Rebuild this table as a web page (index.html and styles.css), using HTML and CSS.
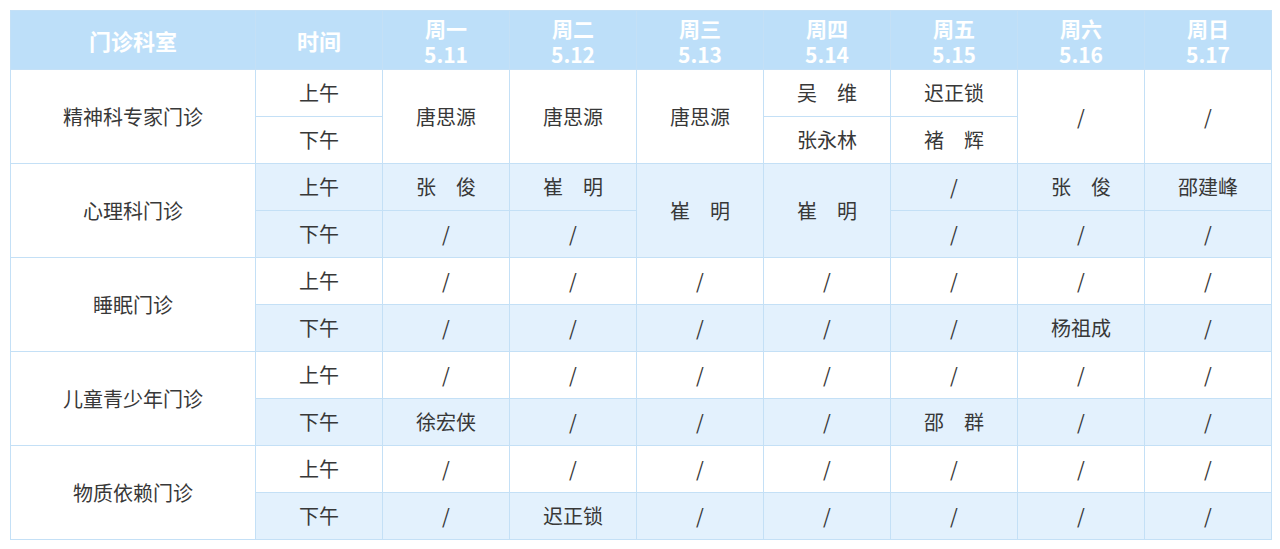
FILE: index.html
```html
<!DOCTYPE html>
<html lang="zh-CN">
<head>
<meta charset="utf-8">
<title>门诊排班</title>
<link rel="stylesheet" href="styles.css">
</head>
<body>
<table class="schedule">
  <colgroup>
    <col class="c-dept">
    <col class="c-time">
    <col class="c-day"><col class="c-day"><col class="c-day"><col class="c-day"><col class="c-day"><col class="c-day"><col class="c-day">
  </colgroup>
  <thead>
    <tr>
      <th class="h-big">门诊科室</th>
      <th class="h-big">时间</th>
      <th><span class="wk">周一</span><span class="dt">5.11</span></th>
      <th><span class="wk">周二</span><span class="dt">5.12</span></th>
      <th><span class="wk">周三</span><span class="dt">5.13</span></th>
      <th><span class="wk">周四</span><span class="dt">5.14</span></th>
      <th><span class="wk">周五</span><span class="dt">5.15</span></th>
      <th><span class="wk">周六</span><span class="dt">5.16</span></th>
      <th><span class="wk">周日</span><span class="dt">5.17</span></th>
    </tr>
  </thead>
  <tbody>
    <tr>
      <td rowspan="2" class="dept">精神科专家门诊</td>
      <td>上午</td>
      <td rowspan="2">唐思源</td>
      <td rowspan="2">唐思源</td>
      <td rowspan="2">唐思源</td>
      <td>吴　维</td>
      <td>迟正锁</td>
      <td rowspan="2">/</td>
      <td rowspan="2">/</td>
    </tr>
    <tr>
      <td>下午</td>
      <td>张永林</td>
      <td>褚　辉</td>
    </tr>
    <tr class="tint">
      <td rowspan="2" class="dept">心理科门诊</td>
      <td>上午</td>
      <td>张　俊</td>
      <td>崔　明</td>
      <td rowspan="2">崔　明</td>
      <td rowspan="2">崔　明</td>
      <td>/</td>
      <td>张　俊</td>
      <td>邵建峰</td>
    </tr>
    <tr class="tint">
      <td>下午</td>
      <td>/</td>
      <td>/</td>
      <td>/</td>
      <td>/</td>
      <td>/</td>
    </tr>
    <tr>
      <td rowspan="2" class="dept">睡眠门诊</td>
      <td>上午</td>
      <td>/</td><td>/</td><td>/</td><td>/</td><td>/</td><td>/</td><td>/</td>
    </tr>
    <tr class="tint">
      <td>下午</td>
      <td>/</td><td>/</td><td>/</td><td>/</td><td>/</td><td>杨祖成</td><td>/</td>
    </tr>
    <tr>
      <td rowspan="2" class="dept">儿童青少年门诊</td>
      <td>上午</td>
      <td>/</td><td>/</td><td>/</td><td>/</td><td>/</td><td>/</td><td>/</td>
    </tr>
    <tr class="tint">
      <td>下午</td>
      <td>徐宏侠</td><td>/</td><td>/</td><td>/</td><td>邵　群</td><td>/</td><td>/</td>
    </tr>
    <tr>
      <td rowspan="2" class="dept">物质依赖门诊</td>
      <td>上午</td>
      <td>/</td><td>/</td><td>/</td><td>/</td><td>/</td><td>/</td><td>/</td>
    </tr>
    <tr class="tint">
      <td>下午</td>
      <td>/</td><td>迟正锁</td><td>/</td><td>/</td><td>/</td><td>/</td><td>/</td>
    </tr>
  </tbody>
</table>
</body>
</html>
```

FILE: styles.css
```css
html, body {
  margin: 0;
  padding: 0;
  background: #ffffff;
}

body {
  padding: 10px;
  font-family: "Noto Sans CJK SC", "Microsoft YaHei", sans-serif;
}

.schedule {
  width: 1261px;
  border-collapse: collapse;
  table-layout: fixed;
  color: #383838;
}

.c-dept { width: 245px; }
.c-time { width: 127px; }
.c-day { width: 127px; }

.schedule th,
.schedule td {
  border: 1px solid #c4e0f6;
  text-align: center;
  vertical-align: middle;
  padding: 0;
}

.schedule thead th {
  height: 58px;
  background: #bddff9;
  color: #ffffff;
  font-weight: 700;
  font-size: 21px;
  line-height: 26px;
}

.schedule thead th.h-big {
  font-size: 22px;
}

.wk,
.dt {
  display: block;
  height: 26px;
  line-height: 26px;
}

.wk {
  padding-top: 2px;
}

.schedule tbody td {
  height: 46px;
  font-size: 20px;
  line-height: 24px;
  background: #ffffff;
}

.schedule tbody tr.tint td {
  background: #e3f1fd;
}

.schedule tbody tr.tint td.dept,
.schedule tbody td.dept {
  background: #ffffff;
}
```
